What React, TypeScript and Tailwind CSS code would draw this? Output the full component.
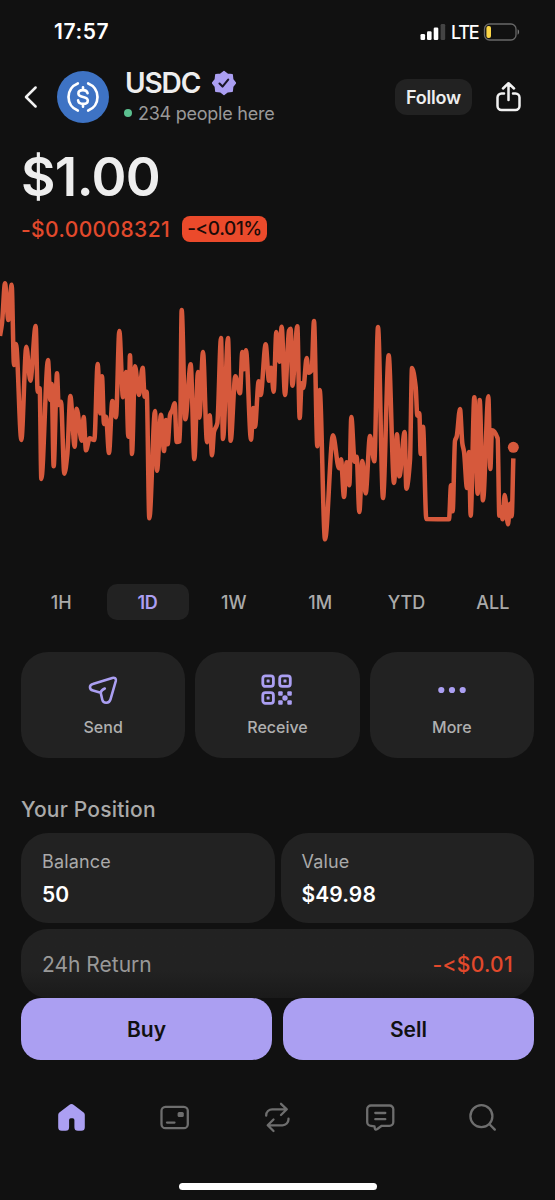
import type { ReactNode } from "react";

// x,y pairs on a 1665 x 840 grid
const prices: [number, number][] = [
  [0, 198], [6, 160], [15, 40], [25, 150], [35, 44], [42, 285], [48, 222], [64, 510], [79, 230], [91, 332],
  [107, 168], [113, 365], [119, 355], [124, 627], [144, 270], [151, 390], [155, 342], [161, 589], [171, 310],
  [176, 405], [183, 395], [193, 611], [202, 553], [211, 378], [224, 530], [230, 416], [245, 512], [251, 441],
  [258, 541], [269, 505], [283, 510], [293, 282], [301, 430], [306, 319], [312, 462], [318, 440], [327, 549],
  [337, 393], [348, 442], [358, 183], [369, 382], [378, 306], [385, 500], [390, 256], [396, 552], [405, 289],
  [417, 375], [428, 293], [434, 380], [440, 365], [448, 745], [465, 423], [471, 602], [483, 434], [492, 543],
  [498, 450], [503, 523], [510, 435], [517, 420], [524, 400], [530, 516], [540, 513], [545, 120], [556, 448],
  [572, 283], [583, 567], [594, 306], [598, 443], [609, 246], [621, 517], [629, 436], [636, 556], [642, 485],
  [652, 460], [663, 204], [669, 507], [684, 204], [692, 512], [706, 319], [720, 370], [727, 246], [732, 298],
  [738, 241], [753, 509], [760, 414], [765, 470], [776, 334], [782, 375], [797, 223], [807, 332], [813, 293],
  [821, 365], [829, 186], [838, 275], [845, 170], [855, 375], [867, 182], [872, 176], [877, 347], [892, 169],
  [899, 444], [905, 340], [910, 354], [920, 264], [926, 308], [935, 300], [942, 153], [952, 529], [959, 360],
  [975, 808], [999, 496], [1017, 595], [1023, 568], [1032, 681], [1040, 577], [1048, 646], [1054, 441],
  [1064, 575], [1070, 560], [1078, 726], [1087, 573], [1097, 670], [1110, 498], [1123, 574], [1134, 171],
  [1149, 684], [1166, 256], [1182, 639], [1191, 493], [1198, 619], [1214, 486], [1219, 656], [1230, 570],
  [1236, 294], [1247, 350], [1252, 437], [1258, 430], [1262, 552], [1269, 470], [1279, 747], [1347, 748],
  [1353, 646], [1358, 724], [1365, 512], [1370, 500], [1380, 417], [1387, 520], [1392, 545], [1401, 654],
  [1407, 546], [1412, 737], [1423, 382], [1433, 671], [1439, 390], [1449, 691], [1465, 379], [1471, 597],
  [1476, 481], [1493, 505], [1498, 737], [1502, 711], [1508, 748], [1514, 675], [1524, 763], [1530, 701],
  [1535, 739], [1540, 565],
];

// monotone cubic so the line never overshoots a price
function linePath(pts: [number, number][]) {
  const slope = (i: number) => (pts[i + 1][1] - pts[i][1]) / (pts[i + 1][0] - pts[i][0]);
  const tangent = (i: number) => {
    if (i === 0) return slope(0);
    if (i === pts.length - 1) return slope(i - 1);
    const a = slope(i - 1);
    const b = slope(i);
    return a * b <= 0 ? 0 : (2 * a * b) / (a + b);
  };
  let d = `M${pts[0][0]},${pts[0][1]}`;
  for (let i = 0; i < pts.length - 1; i++) {
    const [x0, y0] = pts[i];
    const [x1, y1] = pts[i + 1];
    const t = (x1 - x0) / 3;
    d += `C${x0 + t},${y0 + t * tangent(i)} ${x1 - t},${y1 - t * tangent(i + 1)} ${x1},${y1}`;
  }
  return d;
}

const ranges = ["1H", "1D", "1W", "1M", "YTD", "ALL"];

function StatusBar() {
  return (
    <div className="flex h-[63px] items-center justify-between pl-[54px] pr-[35px]">
      <span className="text-[21px] font-semibold tracking-[0.6px] text-white">17:57</span>
      <div className="flex items-center">
        <svg width="26" height="18" viewBox="0 0 26 18">
          <rect x="0.5" y="11" width="4.6" height="6" rx="1.3" fill="#fff" />
          <rect x="7" y="8.3" width="4.6" height="8.7" rx="1.3" fill="#fff" />
          <rect x="13.7" y="4.5" width="4.6" height="12.5" rx="1.3" fill="#fff" />
          <rect x="20.6" y="1" width="4.6" height="16" rx="1.3" fill="#444" />
        </svg>
        <span className="ml-[5px] w-[28px] pt-px text-[18px] font-medium tracking-[-1.3px] text-white">LTE</span>
        <svg className="ml-[4px]" width="37" height="18" viewBox="0 0 37 18">
          <rect x="1.5" y="1" width="31.5" height="16" rx="5" fill="none" stroke="#686868" strokeWidth="1.3" />
          <path d="M34.6 6.3c2 .8 2 4.6 0 5.4z" fill="#777" />
          <rect x="3.4" y="3" width="4.6" height="12" rx="2" fill="#fbd546" />
        </svg>
      </div>
    </div>
  );
}

function Header() {
  return (
    <header className="flex h-[68px] items-center pl-[24px] pr-[33px]">
      <svg width="14" height="24" viewBox="0 0 14 24" fill="none" stroke="#f2f2f2" strokeWidth="2.5" strokeLinecap="round" strokeLinejoin="round">
        <path d="M11.600 2.500 2 12l9.600 9.500" />
      </svg>
      <svg className="ml-[19px]" width="52" height="52" viewBox="0 0 52 52" fill="none" stroke="#fff" strokeLinecap="round">
        <circle cx="26" cy="26" r="26" fill="#3e73c4" stroke="none" />
        <path d="M20.800 12.400a14.600 14.600 0 0 0 0 27.200M31.200 12.400a14.600 14.600 0 0 1 0 27.200" strokeWidth="2.700" />
        <path d="M30.600 22.300c-.4-2.200-2.100-3.200-4.600-3.200-2.800 0-4.600 1.300-4.600 3.300 0 5 9.400 2 9.400 7 0 2.200-2 3.500-4.800 3.500-2.700 0-4.600-1.200-4.900-3.500M26 16.300v2.600M26 33.100v2.600" strokeWidth="2.600" />
      </svg>
      <div className="ml-[15px] flex flex-col">
        <div className="flex h-[32px] items-center">
          <h1 className="w-[88px] pl-px text-[28px] leading-8 font-semibold tracking-[-1.1px] text-[#eee]">USDC</h1>
          <svg width="24" height="26" viewBox="0 0 24 26">
            <path
              d="M12 1.500 15.600 4.300 20.200 4.800 20.700 9.400 23.500 13 20.700 16.600 20.200 21.200 15.600 21.700 12 24.500 8.400 21.700 3.800 21.200 3.300 16.600 .5 13 3.300 9.400 3.800 4.800 8.400 4.300Z"
              fill="#ab9ff2"
              stroke="#ab9ff2"
              strokeWidth="1.400"
              strokeLinejoin="round"
            />
            <path d="m7.500 13.600 3 3 5.700-7" fill="none" stroke="#1a1728" strokeWidth="2.100" strokeLinecap="round" strokeLinejoin="round" />
          </svg>
        </div>
        <div className="flex h-[28px] items-center">
          <span className="h-2 w-2 rounded-full bg-[#5bc08f]" />
          <span className="ml-[6px] text-[18px] tracking-[-0.25px] whitespace-nowrap text-[#999]">234 people here</span>
        </div>
      </div>
      <button className="ml-auto h-9 w-[77px] rounded-xl bg-[#222] text-[18px] font-semibold tracking-[-0.2px] text-[#eee]">
        Follow
      </button>
      <svg className="ml-[24px]" width="26" height="32" viewBox="0 0 26 32" fill="none" stroke="#f2f2f2" strokeWidth="2.500" strokeLinecap="round" strokeLinejoin="round">
        <path d="M8 12.500H5.500a4 4 0 0 0-4 4V25a4 4 0 0 0 4 4h14a4 4 0 0 0 4-4v-8.500a4 4 0 0 0-4-4H17M12.500 19V2.500M7 7.500l5.500-5.300L18 7.500" />
      </svg>
    </header>
  );
}

function Chart() {
  return (
    <svg className="block" width="555" height="280" viewBox="0 0 1665 840">
      <path d={linePath(prices)} fill="none" stroke="#d6593c" strokeWidth="13.5" strokeLinejoin="round" />
      <circle cx="1540" cy="532" r="16.500" fill="#d6593c" />
    </svg>
  );
}

function ActionCard({ label, children }: { label: string; children: ReactNode }) {
  return (
    <button className="flex h-[106px] flex-1 flex-col items-center rounded-[27px] bg-[#222] pt-[22px]">
      <div className="flex h-8 items-center">{children}</div>
      <span className="mt-[9px] text-[16px] font-medium text-[#b0b0b0]">{label}</span>
    </button>
  );
}

function SendIcon() {
  return (
    <svg width="30" height="30" viewBox="0 0 30 30" fill="none" stroke="#ab9ff2" strokeWidth="2.600" strokeLinecap="round" strokeLinejoin="round">
      <path d="M16.800 13.500C14.500 14.500 13 16 12.700 17.700M12.700 17.700 5 15.600C1 14.500 1 9.900 4.800 8.900L24.300 2.900C26.800 2.200 28.300 3.600 27.800 6L22.500 24.300C21.200 28.800 15.300 28.800 14.300 24.700Z" />
    </svg>
  );
}

function QrIcon() {
  return (
    <svg width="32" height="32" viewBox="0 0 32 32" fill="#ab9ff2">
      <g fill="none" stroke="#ab9ff2" strokeWidth="2.800">
        <rect x="1.800" y="1.800" width="10.600" height="10.600" rx="2.600" />
        <rect x="18.700" y="1.800" width="10.600" height="10.600" rx="2.600" />
        <rect x="1.800" y="18.700" width="10.600" height="10.600" rx="2.600" />
      </g>
      <rect x="5.600" y="5.600" width="3" height="3" rx=".5" />
      <rect x="22.500" y="5.600" width="3" height="3" rx=".5" />
      <rect x="5.600" y="22.500" width="3" height="3" rx=".5" />
      <rect x="17.200" y="17.200" width="4.500" height="4.500" rx="1" />
      <rect x="26.300" y="17.200" width="4.500" height="4.500" rx="1" />
      <circle cx="24" cy="24" r="2.700" />
      <rect x="17.200" y="26.300" width="4.500" height="4.500" rx="1" />
      <rect x="26.300" y="26.300" width="4.500" height="4.500" rx="1" />
    </svg>
  );
}

function DotsIcon() {
  return (
    <svg width="30" height="10" viewBox="0 0 30 10" fill="#ab9ff2">
      <circle cx="4.300" cy="5" r="3.100" />
      <circle cx="15" cy="5" r="3.100" />
      <circle cx="25.700" cy="5" r="3.100" />
    </svg>
  );
}

function TabBar() {
  return (
    <nav className="flex h-[66px] items-center pr-[21px] pl-[19px] text-[#6e6e6e]">
      <div className="flex flex-1 justify-center">
        <svg width="32" height="32" viewBox="0 0 32 32" fill="#ab9ff2">
          <path d="M14.200 4a3.500 3.500 0 0 1 4.600 0l9.500 7.300c1 .8 1.500 1.600 1.500 2.900v12a3.500 3.500 0 0 1-3.500 3.500h-3.400a3.500 3.500 0 0 1-3.500-3.500v-7.200a1.700 1.700 0 0 0-1.700-1.700h-1.900a1.700 1.700 0 0 0-1.700 1.700v7.200a3.500 3.500 0 0 1-3.500 3.500H6.700a3.500 3.500 0 0 1-3.500-3.500v-12c0-1.300.5-2.100 1.500-2.900z" />
        </svg>
      </div>
      <div className="flex flex-1 justify-center">
        <svg width="32" height="32" viewBox="0 0 32 32" fill="none" stroke="currentColor" strokeWidth="2.300" strokeLinecap="round">
          <rect x="3.500" y="5.800" width="26.300" height="21.400" rx="4" />
          <path d="M9 21.600h7.500" />
          <rect x="19.600" y="11" width="6.200" height="5" rx="1.500" fill="currentColor" stroke="none" />
        </svg>
      </div>
      <div className="flex flex-1 justify-center">
        <svg width="32" height="32" viewBox="0 0 32 32" fill="none" stroke="currentColor" strokeWidth="2.300" strokeLinecap="round" strokeLinejoin="round">
          <path d="M5.200 14.700v-.4a6 6 0 0 1 6-6h14.400M20 2.800l5.800 5.500L20 14M27.500 17.700v.6a6 6 0 0 1-6 6H7M12.500 18.500l-5.800 5.800 5.800 5.700" />
        </svg>
      </div>
      <div className="flex flex-1 justify-center">
        <svg width="32" height="32" viewBox="0 0 32 32" fill="none" stroke="currentColor" strokeWidth="2.300" strokeLinecap="round" strokeLinejoin="round">
          <path d="M7 4.500h18.500a3.800 3.800 0 0 1 3.800 3.800V21a3.800 3.800 0 0 1-3.800 3.800h-7.800L13.300 28c-1.300.9-2.300.7-2.500-.6l-.3-2L7 24.800A3.800 3.800 0 0 1 3.200 21V8.300A3.800 3.800 0 0 1 7 4.500ZM11.300 12h10M11.300 18.200h10" />
        </svg>
      </div>
      <div className="flex flex-1 justify-center">
        <svg width="32" height="32" viewBox="0 0 32 32" fill="none" stroke="currentColor" strokeWidth="2.300" strokeLinecap="round">
          <circle cx="14.400" cy="15.200" r="11" />
          <path d="m22.500 23.200 5.300 5.400" />
        </svg>
      </div>
    </nav>
  );
}

export default function App() {
  return (
    <div className="flex h-[1200px] w-[555px] flex-col overflow-hidden bg-[#111] font-[Inter,sans-serif]">
      <StatusBar />
      <Header />

      <section className="h-[139px] pl-[21px]">
        <div className="pt-[14px] text-[53px] leading-[64px] font-semibold tracking-[-0.6px] text-[#eee]">$1.00</div>
        <div className="mt-[7px] flex h-[26px] items-center">
          <span className="w-[161px] pt-px text-[21px] font-medium tracking-[0.4px] whitespace-nowrap text-[#e2492c]">-$0.00008321</span>
          <span className="flex h-[26px] w-[85px] items-center justify-center rounded-lg bg-[#eb4a2b] pt-px text-[19px] font-medium tracking-[-0.4px] text-[#1b0b08]">
            -&lt;0.01%
          </span>
        </div>
      </section>

      <Chart />

      <div className="mt-[34px] flex gap-[5px] px-[21px]">
        {ranges.map((range) => (
          <button
            key={range}
            className={
              range === "1D"
                ? "h-9 flex-1 rounded-[10px] bg-[#222] pr-px text-[18px] font-semibold tracking-[-0.2px] text-[#ab9ff2]"
                : "h-9 flex-1 pr-px text-[18px] font-medium text-[#aaa]"
            }
          >
            {range}
          </button>
        ))}
      </div>

      <div className="mt-[32px] flex gap-[10px] px-[21px]">
        <ActionCard label="Send">
          <SendIcon />
        </ActionCard>
        <ActionCard label="Receive">
          <QrIcon />
        </ActionCard>
        <ActionCard label="More">
          <DotsIcon />
        </ActionCard>
      </div>

      <section className="mt-[35px] px-[21px]">
        <h2 className="h-[40px] pt-px text-[21px] leading-[32px] font-medium tracking-[0.2px] text-[#aaa]">Your Position</h2>
        <div className="flex gap-[6px]">
          <div className="h-[90px] flex-1 rounded-[27px] bg-[#222] px-[21px] pt-[15px]">
            <div className="text-[18px] leading-[27px] tracking-[0.15px] text-[#aaa]">Balance</div>
            <div className="mt-[5px] text-[21px] leading-[30px] font-semibold text-white">50</div>
          </div>
          <div className="h-[90px] flex-1 rounded-[27px] bg-[#222] px-[21px] pt-[15px]">
            <div className="text-[18px] leading-[27px] tracking-[0.15px] text-[#aaa]">Value</div>
            <div className="mt-[5px] text-[21px] leading-[30px] font-semibold tracking-[0.1px] text-white">$49.98</div>
          </div>
        </div>
        <div className="mt-[6px] flex h-[69px] items-center justify-between rounded-[27px] bg-linear-to-b from-[#222] from-60% to-[#1a1a1a] px-[21px] pt-[2px]">
          <span className="text-[21px] text-[#999]">24h Return</span>
          <span className="text-[21px] font-medium tracking-[0.3px] text-[#e2492c]">-&lt;$0.01</span>
        </div>
      </section>

      <div className="flex gap-[11px] px-[21px]">
        <button className="h-[62px] flex-1 rounded-[20px] bg-[#ab9ff2] pt-[2px] text-[21px] font-semibold text-[#111]">Buy</button>
        <button className="h-[62px] flex-1 rounded-[20px] bg-[#ab9ff2] pt-[2px] text-[21px] font-semibold text-[#111]">Sell</button>
      </div>

      <div className="mt-[24px]">
        <TabBar />
      </div>
      <div className="mx-auto mt-[33px] h-[7px] w-[198px] rounded-full bg-white" />
    </div>
  );
}
